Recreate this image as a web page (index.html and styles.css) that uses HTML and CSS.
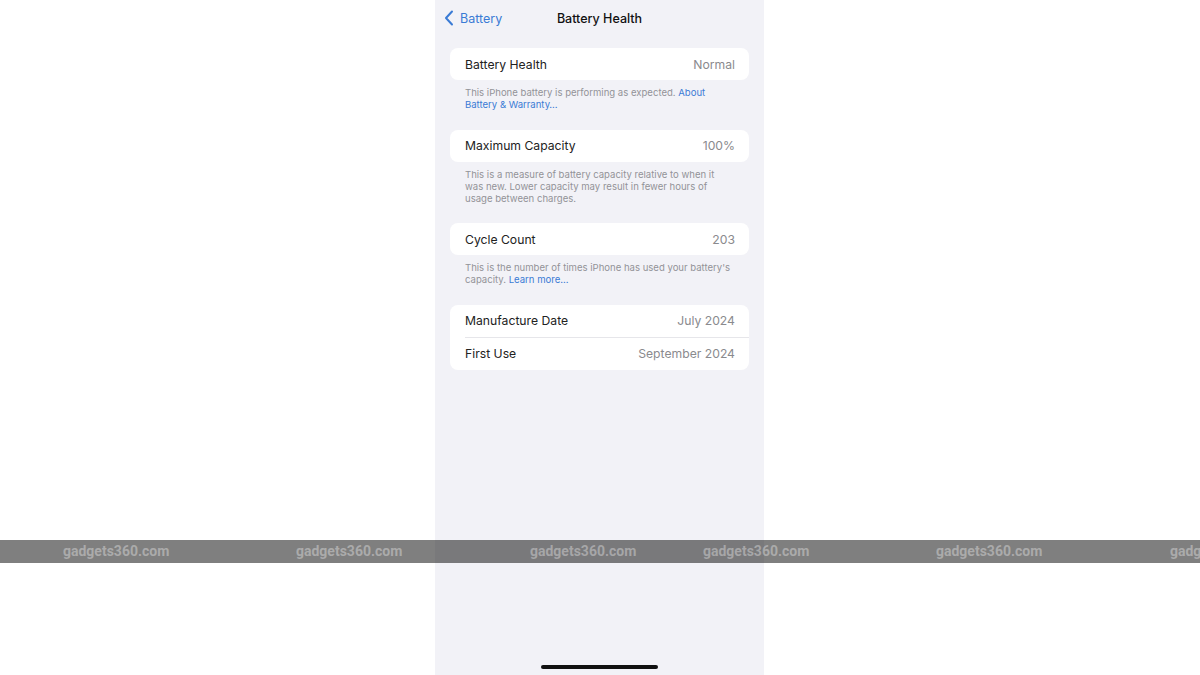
FILE: index.html
```html
<!DOCTYPE html>
<html>
<head>
<meta charset="utf-8">
<link rel="stylesheet" href="styles.css">
</head>
<body>
<div class="phone">
  <div class="nav">
    <div class="back">
      <svg class="chev" width="10" height="16" viewBox="0 0 10 16"><path d="M8 1.5 L2 8 L8 14.5" fill="none" stroke="#3a7bd5" stroke-width="2" stroke-linecap="round" stroke-linejoin="round"/></svg>
      <span>Battery</span>
    </div>
    <div class="title">Battery Health</div>
  </div>

  <div class="card">
    <div class="row"><span class="label">Battery Health</span><span class="value">Normal</span></div>
  </div>
  <div class="foot">This iPhone battery is performing as expected. <span class="link">About Battery &amp; Warranty…</span></div>

  <div class="card">
    <div class="row"><span class="label">Maximum Capacity</span><span class="value">100%</span></div>
  </div>
  <div class="foot">This is a measure of battery capacity relative to when it was new. Lower capacity may result in fewer hours of usage between charges.</div>

  <div class="card">
    <div class="row"><span class="label">Cycle Count</span><span class="value">203</span></div>
  </div>
  <div class="foot">This is the number of times iPhone has used your battery's capacity. <span class="link">Learn more…</span></div>

  <div class="card">
    <div class="row sep"><span class="label">Manufacture Date</span><span class="value">July 2024</span></div>
    <div class="row"><span class="label">First Use</span><span class="value">September 2024</span></div>
  </div>

  <div class="spacer"></div>
  <div class="home"></div>
</div>

<div class="band">
  <span class="wm w1">gadgets360.com</span>
  <span class="wm w2">gadgets360.com</span>
  <span class="wm w3">gadgets360.com</span>
  <span class="wm w4">gadgets360.com</span>
  <span class="wm w5">gadgets360.com</span>
  <span class="wm w6">gadg</span>
</div>
</body>
</html>
```

FILE: styles.css
```css
html, body {
  margin: 0;
  padding: 0;
  background: #ffffff;
  width: 1200px;
  height: 675px;
  overflow: hidden;
}
body {
  display: flex;
  justify-content: flex-start;
  font-family: Inter, "Noto Sans", "Liberation Sans", sans-serif;
  position: relative;
}
.phone {
  margin-left: 435px;
  width: 329px;
  height: 675px;
  box-sizing: border-box;
  padding: 0 15px 0 15px;
  background: #f2f2f7;
  display: flex;
  flex-direction: column;
  align-items: stretch;
}
.nav {
  height: 36px;
  position: relative;
  display: flex;
  align-items: center;
  justify-content: center;
  margin: 0 -15px 12px -15px;
}
.back {
  position: absolute;
  left: 9px;
  top: 10px;
  display: flex;
  align-items: center;
  gap: 6px;
  color: #3a7bd5;
  font-size: 12.5px;
}
.chev { display: block; }
.title {
  font-size: 12.5px;
  font-weight: 500;
  color: #111;
}
.card {
  background: #ffffff;
  border-radius: 8px;
}
.row {
  height: 32px;
  display: flex;
  align-items: center;
  justify-content: space-between;
  padding: 0 14px 0 15px;
  font-size: 12.2px;
}
.row.sep {
  height: 33px;
  box-sizing: border-box;
  border-bottom: 1px solid #e6e6ea;
  margin-left: 15px;
  padding-left: 0;
}
.label { color: #222; }
.value { color: #8a8a8e; }
.foot {
  padding: 7px 18px 18.5px 15px;
  font-size: 9.55px;
  line-height: 12px;
  color: #939398;
}
.link { color: #3a7bd5; }
.spacer { flex: 1; }
.home {
  align-self: center;
  width: 117px;
  height: 4px;
  border-radius: 2px;
  background: #111;
  margin-bottom: 6px;
}
.band {
  position: absolute;
  left: 0;
  top: 540px;
  width: 1200px;
  height: 23px;
  background: rgba(0, 0, 0, 0.5);
  overflow: hidden;
}
.wm {
  position: absolute;
  top: 0;
  line-height: 23px;
  font-family: Roboto, "Liberation Sans", sans-serif;
  font-weight: 700;
  font-size: 14px;
  color: rgba(255, 255, 255, 0.35);
  white-space: nowrap;
}
.w1 { left: 63px; }
.w2 { left: 296px; }
.w3 { left: 530px; }
.w4 { left: 703px; }
.w5 { left: 936px; }
.w6 { left: 1170px; }
```
